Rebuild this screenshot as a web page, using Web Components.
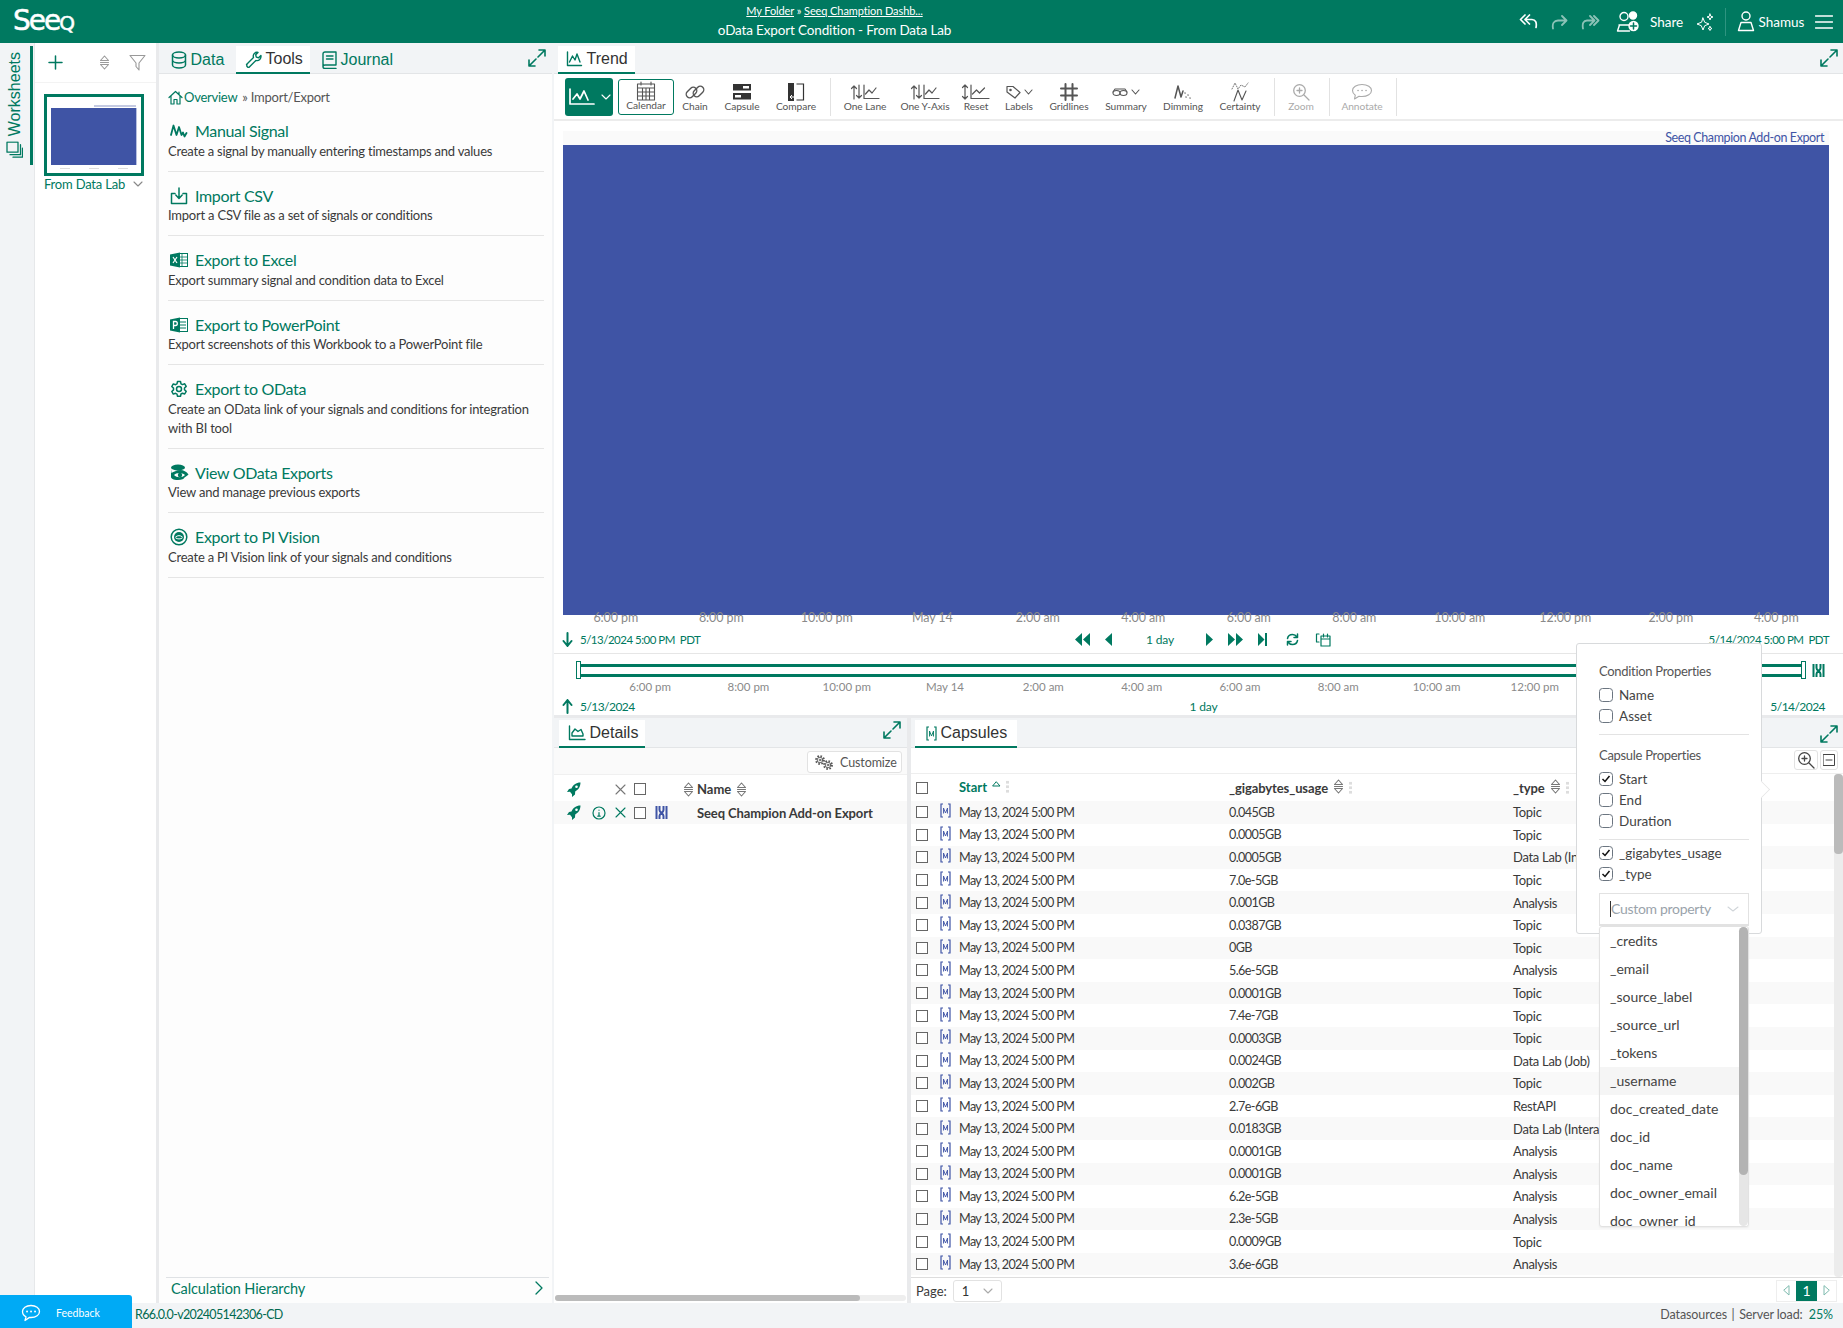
<!DOCTYPE html>
<html lang="en"><head><meta charset="utf-8"><title>oData Export Condition - From Data Lab</title>
<style>
html,body{margin:0;padding:0;background:#f2f4f6}
body{font-family:"Lato","Noto Sans",sans-serif;font-size:14px;color:#3a3a3a;width:1843px;height:1328px;overflow:hidden}
</style></head><body>
<sq-app></sq-app>
<script>
const svg=(w,h,body,sw=1.3,extra='')=>`<svg width="${w}" height="${h}" viewBox="0 0 ${w} ${h}" fill="none" stroke="currentColor" stroke-width="${sw}" stroke-linecap="round" stroke-linejoin="round" ${extra} style="display:block;flex:none">${body}</svg>`;
const I={
 expand:()=>svg(18,18,'<path d="M10 8l7-7M11 1h6v6M8 10l-7 7M1 11v6h6"/>',1.6),
 db:(s='')=>svg(16,18,'<ellipse cx="8" cy="4" rx="6.5" ry="3"/><path d="M1.5 4v10c0 1.7 3 3 6.5 3s6.5-1.300 6.500-3V4M1.500 9c0 1.700 3 3 6.500 3s6.500-1.300 6.500-3"/>',1.5,s),
 wrench:()=>svg(17,17,'<path d="M1.500 13.500l7-7c-.8-2.500.5-5 3.500-5.200l1 .2-2.300 2.300.6 2.300 2.300.6 2.300-2.300c.6 3-2 6-5 5l-6.800 6.800c-1 .8-3-1-2.100-2.700z"/>',1.4),
 book:()=>svg(15,18,'<path d="M3 1h11v13H3c-1.200 0-2 .8-2 2s.8 1.500 2 1.500h11M1 16V3c0-1.200.8-2 2-2M4.500 5h6.500M4.500 8h6.500"/>',1.4),
 sort:(c='#9a9a9a')=>svg(11,15,`<path d="M5.500 1L9.500 5.500h-8zM5.500 14L1.500 9.500h8zM1.500 7.500h8" stroke="${c}"/>`,1.1),
 filter:()=>svg(17,17,'<path d="M1 1.500h15L10 9v7L7 12.500V9z"/>',1.1),
 pages:()=>svg(17,17,'<path d="M6 1h10v11H6zM3.500 4v10.500h10M1 7v9.500h9" />',1.3),
 home:()=>svg(15,15,'<path d="M1 7.500L7.500 1.500 14 7.500M3 6v8h3v-4.500h3V14h3V6M11 2v2.500"/>',1.2),
 signal:()=>svg(18,16,'<path d="M1 12L3.500 2.500l3 9.500L9 4l2.500 8 1.500-2.500 1.500 4 2-3.500" />',1.8),
 csv:()=>svg(18,18,'<path d="M5 6.500H1.500v10h15v-10H13M9 1v10M5.800 8L9 11.500 12.200 8"/>',1.5),
 excel:()=>`<svg width="18" height="16" viewBox="0 0 18 16" style="display:block"><rect x="8" y="1.500" width="9.500" height="13" fill="#fff" stroke="#007960"/><path d="M8 5h9.500M8 8h9.500M8 11h9.500M12 1.500v13" stroke="#007960" stroke-width=".8"/><path d="M0 2.500L10 .5v15L0 13.500z" fill="#007960"/><path d="M3 5l4 6M7 5l-4 6" stroke="#fff" stroke-width="1.200"/></svg>`,
 ppt:()=>`<svg width="18" height="16" viewBox="0 0 18 16" style="display:block"><rect x="8" y="1.500" width="9.500" height="13" fill="#fff" stroke="#007960"/><path d="M10 5h6M10 8h6M10 11h6" stroke="#007960"/><path d="M0 2.500L10 .5v15L0 13.500z" fill="#007960"/><path d="M3.500 12V4.500h2c2.400 0 2.400 4 0 4h-2" stroke="#fff" fill="none" stroke-width="1.300"/></svg>`,
 gear:()=>svg(18,18,'<path d="M7.500 1.500h3l.5 2.300 1.500.8 2.200-.8 1.500 2.600-1.700 1.600v1.800l1.700 1.600-1.500 2.600-2.200-.8-1.500.8-.5 2.300h-3L7 14.100l-1.500-.8-2.200.8-1.500-2.600 1.700-1.600V8.100L1.800 6.500l1.500-2.600 2.200.8L7 3.900z"/><circle cx="9" cy="9" r="2.500"/>',1.5),
 dbeye:()=>`<svg width="19" height="18" viewBox="0 0 19 18" style="display:block"><ellipse cx="8" cy="3.500" rx="7" ry="3" fill="#007960"/><path d="M1 5v8c0 1.500 2 3 7 3 4 0 6-1 6.500-2.500 1.500-.8 3-2 4-3-2-3-5-4.500-8-4.500-4 0-7 2-9 3z" fill="#007960"/><path d="M4 11c2-2 7-3 11 0-3 3-8 3-11 0z" fill="#fff"/><circle cx="10" cy="11" r="2.200" fill="#007960"/></svg>`,
 pi:()=>`<svg width="18" height="18" viewBox="0 0 18 18" fill="none" stroke="#007960" style="display:block"><circle cx="9" cy="9" r="7.800" stroke-width="1.500"/><circle cx="9" cy="9" r="5" fill="#007960" stroke="none"/><path d="M5.500 9c2-1.800 5-1.800 7 0M5.500 9.800c2 1.500 5 1.500 7 0" stroke="#fff" stroke-width="1"/></svg>`,
 trend:(c='currentColor')=>svg(17,16,`<path d="M1.500 1v13.500h14M3.500 11l3-6 2.500 4 2-6 3 8" stroke="${c}"/>`,1.4),
 area:()=>svg(18,16,'<path d="M1.500 1v13.500h15.500M4 11V8l3-4 3 2.500 3-2 2 4.500v2z"/>',1.4),
 cap:(c='#3f54a5')=>`<svg width="11" height="15" viewBox="0 0 11 15" fill="none" stroke="${c}" style="display:block;flex:none"><path d="M3 1H1v13h2M8 1h2v13H8" stroke-width="1.200"/><path d="M3.500 10.500V5l2 5 2-5v5.500" stroke-width=".9"/></svg>`,
 capBold:(c='#3f54a5')=>`<svg width="13" height="15" viewBox="0 0 13 15" fill="none" style="display:block;flex:none"><path d="M1.500 1v13M4.500 1v4c0 3 4 3 4 6v3M8.500 1v4c0 3-4 3-4 6v3M11.500 1v13" stroke="${c}" stroke-width="2"/></svg>`,
 rocket:()=>`<svg width="14" height="15" viewBox="0 0 14 15" style="display:block"><path d="M13.500.5c-4.500 0-7.500 2.500-9 6L2 7 0 10l3-.2 2 2.500L5 15l3-2.500.2-3C11 8 13.500 5 13.500.5z" fill="#007960"/><circle cx="9.500" cy="4.800" r="1.300" fill="#fff"/></svg>`,
 info:()=>svg(14,14,'<circle cx="7" cy="7" r="6"/><path d="M7 6.500V10M5.800 10.200h2.400M7 4v.2"/>',1.2),
 x:(c)=>svg(11,11,`<path d="M1 1l9 9M10 1l-9 9" stroke="${c}"/>`,1.1),
 gears:()=>svg(20,17,'<circle cx="6" cy="6" r="4" stroke-width="1.800" stroke-dasharray="1.600 1.540" stroke-linecap="butt"/><circle cx="6" cy="6" r="2.800"/><circle cx="6" cy="6" r=".9"/><circle cx="14" cy="11" r="4" stroke-width="1.800" stroke-dasharray="1.600 1.540" stroke-linecap="butt"/><circle cx="14" cy="11" r="2.800"/><circle cx="14" cy="11" r=".9"/>',.9),
 zoom:()=>svg(18,18,'<circle cx="7.500" cy="7.500" r="5.800"/><path d="M12 12l5 5M7.500 5v5M5 7.500h5"/>',1.3),
 chev:(w=10,c='currentColor')=>svg(w,6,`<path d="M1 1l${(w-2)/2} 4 ${(w-2)/2}-4" stroke="${c}"/>`,1.1),
};
const T={
 line:()=>svg(28,20,'<path d="M2 2v15h24M5 12l4-5 3 5 4-8 4 9" stroke-width="1.700"/>',1.7),
 calendar:()=>svg(20,20,'<path d="M5 1v3M15 1v3M1.500 3h17v16h-17zM1.500 7h17M1.500 11h17M1.500 15h17M6.500 7v12M10 7v12M13.500 7v12"/>',1.1),
 chain:()=>svg(22,20,'<rect x="1.500" y="7" width="12" height="7" rx="3.500" transform="rotate(-45 7.500 10.500)"/><rect x="8.500" y="6" width="12" height="7" rx="3.500" transform="rotate(-45 14.500 9.500)"/>',1.4),
 capsule:()=>`<svg width="20" height="18" viewBox="0 0 20 18" style="display:block"><rect x="1" y="1" width="18" height="6.500" fill="#333"/><rect x="1" y="10" width="18" height="6.500" fill="#333"/><rect x="11" y="3" width="6" height="2.500" fill="#fff"/><rect x="3" y="12" width="6" height="2.500" fill="#fff"/></svg>`,
 compare:()=>`<svg width="18" height="20" viewBox="0 0 18 20" style="display:block"><path d="M1 1h6v18H1z" fill="#333"/><path d="M9.500 2h7v16h-7" fill="none" stroke="#333" stroke-width="1.200"/><path d="M5 13l-2 2 2 2M3 15h6M13 4l2 2-2 2M15 6H9" stroke="#fff" fill="none" stroke-width="1"/></svg>`,
 oneLane:()=>svg(30,18,'<path d="M4 16V3M1.500 5.500L4 3l2.500 2.500M9 2v13M6.500 12.500L9 15l2.500-2.500M14 2v13.500h15M15.500 11l3.500-4 3 3 4-5"/>',1.2),
 reset:()=>svg(30,18,'<path d="M4 16V2M1.500 4.500L4 2l2.500 2.500M1.500 13.500L4 16l2.500-2.500M10 2v13.500h18M11.500 11l4-4 3 3 5-5"/>',1.2),
 tag:()=>svg(15,14,'<path d="M1 1.500h6l7 6-5 5.500-8-6z"/><circle cx="4.500" cy="5" r=".7"/>',1.2),
 grid:()=>svg(18,18,'<path d="M5.500 1v16M12.500 1v16M1 5.500h16M1 12.500h16"/>',2),
 glasses:()=>svg(16,10,'<ellipse cx="4.500" cy="6" rx="3.500" ry="2.500"/><ellipse cx="11.500" cy="6" rx="3.500" ry="2.500"/><path d="M1 5l2-3h10l2 3" />',1.1),
 dimming:()=>svg(20,20,'<path d="M2 16L5 4l3 11 2-6" stroke-width="1.500"/><path d="M12 11l.1.1M15 13l.1.1M13 15l.1.1M17 16l.1.1" stroke-width="1.300"/>',1.5),
 certainty:()=>svg(20,22,'<path d="M2 8L5 2l3 6 3-4 4 2 3-4" stroke-dasharray="1 1.500" stroke-width=".8"/><path d="M4 20L8 9l4 10 4-9" stroke-width="1.100"/>',1),
 annotate:()=>svg(22,18,'<path d="M11 1.500c5.500 0 9.500 2.700 9.500 6s-4 6-9.500 6c-1 0-2-.1-3-.3L3.500 16l.8-3.800C2.500 11 1.500 9.400 1.500 7.500c0-3.300 4-6 9.500-6z"/><path d="M7 7.500h.1M11 7.500h.1M15 7.500h.1" stroke-width="1.600"/>',1.1),
};
function def(name,css,fn){
 customElements.define(name,class extends HTMLElement{
  connectedCallback(){
   if(this.shadowRoot)return;
   this.attachShadow({mode:'open'}).innerHTML=`<style>${css}</style>${fn(this)}`;
  }
 });
}
const TABCSS=`:host{display:inline-flex;align-items:center;box-sizing:border-box;height:28px;gap:3.500px;padding:0 9px;font:16px "Liberation Sans",Arial,sans-serif;color:#007960;flex:none}
:host([active]){background:#fff;color:#333;border-bottom:2.500px solid #007960;height:28px}
::slotted([slot=icon]){color:#007960;display:flex}`;
def('sq-tab',TABCSS,()=>`<slot name="icon"></slot><slot></slot>`);

def('sq-cb',`:host{display:inline-block;flex:none;box-sizing:border-box;width:12px;height:12px;border:1.500px solid #666;background:#fff}
:host([round]){width:14px;height:14px;border-radius:3.500px;border:1.200px solid #6b7580}
svg{display:block;margin:1px}`,e=>e.hasAttribute('checked')?`<svg width="10" height="10" viewBox="0 0 10 10" fill="none" stroke="#111" stroke-width="1.500"><path d="M1.500 5l2.500 2.500L8.500 2"/></svg>`:'');

def('sq-header',`:host{display:flex;align-items:center;height:43px;background:#007960;color:#fff;flex:none;font-size:13.500px}
.logo{width:156px;flex:none;padding-left:13px;box-sizing:border-box;font:400 28px/1 "DejaVu Sans",sans-serif;letter-spacing:-2px;-webkit-text-stroke:.5px #fff;margin-top:-2px}
.logo span{font-variant:small-caps}
.mid{flex:1;text-align:center}
.crumbs{font-size:11px;line-height:15px;margin-top:-1px;letter-spacing:-.1px}.crumbs u{text-decoration:underline}
.title{font-size:13.500px;line-height:20px;margin-top:2px;letter-spacing:-.15px}
.right{display:flex;align-items:center;width:330px;flex:none}
.c{display:flex;justify-content:center;align-items:center;flex:none}
.dim{opacity:.55}.sep{width:1px;height:28px;background:#2e9480;flex:none}`,()=>`
<div class="logo">See<span>q</span></div>
<div class="mid"><div class="crumbs"><u>My Folder</u> » <u>Seeq Chamption Dashb...</u></div><div class="title">oData Export Condition - From Data Lab</div></div>
<div class="right">
<span class="c" style="width:31px">${svg(20,17,'<path d="M6 2L1.500 6.500 6 11M10.500 2L6 6.500l4.500 4.500M6 6.500h7c3.500 0 5 3 4 8"/>',1.700)}</span>
<span class="c dim" style="width:30px">${svg(18,16,'<path d="M12 2l4.500 4.500L12 11M16 6.500H8C4 6.500 2 9.500 3 14.500"/>',1.800)}</span>
<span class="c dim" style="width:34px">${svg(22,16,'<path d="M10 2l4.500 4.500L10 11M14 2l4.500 4.500L14 11M13 6.500H7C3.500 6.500 2 9.500 3 14.500"/>',1.800)}</span>
<span class="c" style="width:40px">${svg(24,22,'<circle cx="8" cy="5.500" r="4"/><path d="M3 14h10M1.500 20l2-6M1.500 20h12"/><circle cx="17" cy="4.500" r="3.500" fill="#fff"/><circle cx="17.500" cy="15" r="5.200" fill="#fff" stroke="none"/><path d="M17.500 12v6M14.500 15h6" stroke="#007960" stroke-width="1.500"/>',1.400)}</span>
<span style="margin-left:2px;width:44.500px;flex:none">Share</span>
<span class="c" style="width:20px">${svg(18,18,'<path d="M7 5l1.700 4.300L13 11l-4.300 1.700L7 17l-1.700-4.300L1 11l4.300-1.700zM14 1l.8 2.200L17 4l-2.200.8L14 7l-.8-2.200L11 4l2.200-.8zM14 13.500l.6 1.400 1.400.6-1.400.6-.6 1.400-.6-1.400-1.400-.6 1.400-.6z"/>',1)}</span>
<span style="width:10px;flex:none"></span><span class="sep"></span><span style="width:11px;flex:none"></span>
<span class="c" style="width:18px">${svg(18,22,'<circle cx="9" cy="5" r="4"/><path d="M4 11.500h10l2.500 8h-15z"/>',1.400)}</span>
<span style="margin-left:4px;width:56px;flex:none">Shamus</span>
<span class="c" style="width:18px">${svg(18,16,'<path d="M.5 2h17M.5 8h17M.5 14h17"/>',1.400)}</span>
</div>`);

def('sq-rail',`:host{display:block;width:33px;flex:none;background:#f2f4f6;padding-top:3px;box-sizing:border-box}
.tab{box-sizing:border-box;width:33px;height:119px;border-right:3px solid #007960;display:flex;flex-direction:column;align-items:center;justify-content:center;color:#007960;padding-right:4px}
.t{writing-mode:vertical-rl;transform:rotate(180deg);font:16px "Liberation Sans",Arial,sans-serif;display:flex;align-items:center;gap:5px;padding-right:4px}
.t svg{transform:rotate(90deg)}`,()=>`<div class="tab"><div class="t">${I.pages()}Worksheets</div></div>`);

def('sq-worksheets',`:host{display:block;width:121px;flex:none;background:#fff;margin-left:1px;border-left:1px solid #e6e8ea}
.top{height:40px;box-sizing:border-box;border-bottom:1px solid #f3f3f3;display:flex;align-items:center;color:#999}
.plus{margin-left:13px;color:#007960;width:50px;display:flex}
.s{width:30px;display:flex;padding-left:2px;box-sizing:border-box}
.sheet{margin:11px 0 0 9px}
.th{box-sizing:border-box;width:100px;height:82px;border:3px solid #007960;background:#fff;padding:8px 4px 0 4px;display:flex;flex-direction:column}
.tt{align-self:flex-end;width:42px;height:2px;background:#c4cae2;margin-right:1px;margin-bottom:1px}
.blue{width:85px;height:57px;background:#3f54a5;border-right:1px solid #b7c0e0}
.ax{display:flex;justify-content:space-around;margin-top:3px}.ax i{width:10px;height:1px;background:#ddd}
.cap{display:flex;align-items:center;margin-top:0;color:#007960;font-size:13px;line-height:16px;width:100px;justify-content:space-between;letter-spacing:-.2px}
.cap span{color:#888;margin-right:1px}`,()=>`
<div class="top"><span class="plus">${svg(15,15,'<path d="M7.500 1v13M1 7.500h13"/>',1.500)}</span><span class="s">${I.sort()}</span><span class="s">${I.filter()}</span></div>
<div class="sheet"><div class="th"><div class="tt"></div><div class="blue"></div><div class="ax"><i></i><i></i><i></i></div></div>
<div class="cap">From Data Lab<span>${I.chev(10)}</span></div></div>`);

def('sq-tool-item',`:host{display:block;border-bottom:1px solid #e5e5e5;padding:14.500px 0 10px}
.h{display:flex;align-items:center;color:#007960;font-size:16px;line-height:20px;height:19px;letter-spacing:-.33px}
.i{width:27px;flex:none;display:flex;padding-left:2px;box-sizing:border-box}
.d{font-size:13px;line-height:19px;color:#3a3a3a;margin-top:1px;letter-spacing:-.22px}`,e=>`<div class="h"><span class="i"><slot name="icon"></slot></span>${e.getAttribute('heading')}</div><div class="d"><slot></slot></div>`);

def('sq-tools',`:host{display:flex;flex-direction:column;width:393px;flex:none;background:#fdfdfd;color:#007960}
.bar{height:31px;box-sizing:border-box;padding:3px 0 0 3px;background:#f2f4f6;border-bottom:1px solid #e3e5e7;display:flex;flex:none}
.bar sq-tab:nth-child(3){margin-left:3px}
.ex{margin-left:auto;padding:3px 6px 0 0}
.bc{padding:15px 0 0 9px;font-size:13px;line-height:16px;display:flex;align-items:center;gap:1px;color:#007960;letter-spacing:-.25px}
.bc b{font-weight:400;color:#555;margin-left:4px}
.list{padding:0 8px 0 9px;flex:1;margin-top:2px}
.list sq-tool-item svg{color:#007960}
.calc{margin-left:7px;margin-right:3px;border-top:1px solid #dfe2e5;height:26px;display:flex;align-items:center;justify-content:space-between;padding:0 6px 5px 5px;font-size:14.500px;color:#007960;flex:none;box-sizing:border-box;letter-spacing:-.1px}`,()=>`
<div class="bar"><sq-tab style="width:74px"><span slot="icon">${I.db()}</span>Data</sq-tab><sq-tab active style="width:74px"><span slot="icon">${I.wrench()}</span>Tools</sq-tab><sq-tab style="width:90px"><span slot="icon">${I.book()}</span>Journal</sq-tab><span class="ex">${I.expand()}</span></div>
<div class="bc">${I.home()}Overview <b>» Import/Export</b></div>
<div class="list">
<sq-tool-item heading="Manual Signal"><span slot="icon">${I.signal()}</span>Create a signal by manually entering timestamps and values</sq-tool-item>
<sq-tool-item heading="Import CSV"><span slot="icon">${I.csv()}</span>Import a CSV file as a set of signals or conditions</sq-tool-item>
<sq-tool-item heading="Export to Excel"><span slot="icon">${I.excel()}</span>Export summary signal and condition data to Excel</sq-tool-item>
<sq-tool-item heading="Export to PowerPoint"><span slot="icon">${I.ppt()}</span>Export screenshots of this Workbook to a PowerPoint file</sq-tool-item>
<sq-tool-item heading="Export to OData"><span slot="icon">${I.gear()}</span>Create an OData link of your signals and conditions for integration with BI tool</sq-tool-item>
<sq-tool-item heading="View OData Exports"><span slot="icon">${I.dbeye()}</span>View and manage previous exports</sq-tool-item>
<sq-tool-item heading="Export to PI Vision"><span slot="icon">${I.pi()}</span>Create a PI Vision link of your signals and conditions</sq-tool-item>
</div>
<div class="calc">Calculation Hierarchy ${svg(8,14,'<path d="M1 1l6 6-6 6"/>',1.300)}</div>`);

def('sq-tool-btn',`:host{display:flex;flex-direction:column;align-items:center;justify-content:flex-end;box-sizing:border-box;height:36px;margin-top:1px;flex:none;font-size:10.200px;color:#555;line-height:13px;gap:0;padding-bottom:2px;letter-spacing:-.05px}
:host([disabled]){color:#aaa}
:host([outlined]){border:1px solid #007960;border-radius:3px}
.ic{display:flex;align-items:center;gap:3px;height:21px;margin-bottom:-2px}`,e=>`<div class="ic"><slot></slot></div>${e.getAttribute('label')}`);

def('sq-toolbar',`:host{display:flex;height:47px;box-sizing:border-box;padding:4px 0 0 11px;background:#fff;border-bottom:2px solid #ececec;flex:none;color:#333}
.go{width:48px;height:38px;background:#007960;border-radius:3px;color:#fff;display:flex;align-items:center;justify-content:center;gap:5px;margin-right:5px;flex:none}
.sep{width:1px;height:38px;background:#e2e2e2;flex:none}
.dis{color:#aaa}`,()=>{
 const b=(l,w,ic,x='')=>`<sq-tool-btn label="${l}" style="width:${w}px" ${x}>${ic}</sq-tool-btn>`;
 return `<div class="go">${T.line()}${I.chev(10)}</div>`+
 b('Calendar',56,T.calendar(),'outlined')+b('Chain',42,T.chain())+b('Capsule',52,T.capsule())+b('Compare',56,T.compare())+
 `<span style="width:6px"></span><span class="sep"></span>`+
 b('One Lane',68,T.oneLane())+b('One Y-Axis',52,T.oneLane())+b('Reset',50,T.reset())+b('Labels',36,T.tag()+I.chev(9))+b('Gridlines',64,T.grid())+b('Summary',50,T.glasses()+I.chev(9))+b('Dimming',64,T.dimming())+b('Certainty',50,T.certainty())+
 `<span style="width:9px"></span><span class="sep"></span>`+
 b('Zoom',52,`<span class="dis">${I.zoom()}</span>`,'disabled')+`<span style="width:2px"></span><span class="sep"></span>`+
 b('Annotate',64,`<span class="dis">${T.annotate()}</span>`,'disabled')+`<span style="width:2px"></span><span class="sep"></span>`;
});

def('sq-chart',`:host{display:block;flex:none;height:532px;padding:10px 14px 0 9px;box-sizing:border-box;background:#fff}
.head{height:14px;background:#fafafa;text-align:right;font-size:12.500px;line-height:14px;color:#3f54a5;padding-right:5px;letter-spacing:-.4px}
.plot{height:470px;background:#3f54a5}
.axis{display:grid;grid-template-columns:repeat(12,105.500px);height:14px;margin-top:-4px;position:relative;font-size:12.500px;line-height:14px;color:#8a8a8a;text-align:center;letter-spacing:-.1px}
.nav{display:flex;align-items:center;height:18px;margin-top:5px;color:#007960;font-size:11.500px;margin-left:-1px}
.left{display:flex;align-items:center;gap:7px;width:507px;flex:none;letter-spacing:-.5px}
.c{display:flex;justify-content:center;flex:none;font-size:12px;letter-spacing:-.2px}
.r{flex:1;text-align:right;letter-spacing:-.5px}`,()=>{
 const L=['6:00 pm','8:00 pm','10:00 pm','May 14','2:00 am','4:00 am','6:00 am','8:00 am','10:00 am','12:00 pm','2:00 pm','4:00 pm'];
 const tri=(d)=>`<path d="${d}" fill="#007960" stroke="none"/>`;
 return `<div class="head">Seeq Champion Add-on Export</div><div class="plot"></div>
 <div class="axis">${L.map(t=>`<span>${t}</span>`).join('')}</div>
 <div class="nav"><span class="left">${svg(11,15,'<path d="M5.500 1v12M1.500 9l4 5 4-5"/>',2)}<span>5/13/2024 5:00 PM &nbsp;PDT</span></span>
 <span class="c" style="width:26px">${svg(15,13,tri('M7 0v13L0 6.500zM15 0v13L8 6.500z'))}</span>
 <span class="c" style="width:26px">${svg(7,13,tri('M7 0v13L0 6.500z'))}</span>
 <span class="c" style="width:78px">1 day</span>
 <span class="c" style="width:20px">${svg(7,13,tri('M0 0v13l7-6.500z'))}</span>
 <span class="c" style="width:32px">${svg(15,13,tri('M0 0v13l7-6.500zM8 0v13l7-6.500z'))}</span>
 <span class="c" style="width:22px">${svg(9,13,tri('M0 0v13l6.500-6.500zM7 0h2v13H7z'))}</span>
 <span class="c" style="width:38px">${svg(13,13,'<path d="M1.500 5.500C2 3 4 1.500 6.500 1.500c2 0 3.500 1 4.500 2.500M11.500 7.500c-.5 2.500-2.500 4-5 4-2 0-3.500-1-4.500-2.500M11.500 1v3.500H8M1.500 12V8.500H5"/>',1.500)}</span>
 <span class="c" style="width:24px">${svg(16,15,'<path d="M6 4h9v10H6zM6 7h9M8.500 2v3M12.500 2v3M4 2H1.500v8H4"/>',1.200)}</span>
 <span class="r">5/14/2024 5:00 PM &nbsp;PDT</span></div>`;
});

def('sq-range',`:host{display:block;flex:none;height:62px;background:#fff;border-top:1px solid #e6e6e6;box-sizing:border-box;color:#007960}
.bar{display:flex;align-items:center;margin:7px 0 0 22px;height:18px;width:1249px}
.h{box-sizing:border-box;width:5px;height:18px;border:1.500px solid #007960;flex:none}
.b{flex:1;height:13px;border-top:3px solid #007960;border-bottom:3px solid #007960;box-sizing:border-box}
.ti{margin-left:6px}
.ticks{display:grid;grid-template-columns:repeat(12,98.300px);margin:1px 0 0 47px;font-size:11.500px;line-height:14px;color:#8a8a8a;text-align:center}
.d{display:flex;align-items:center;justify-content:space-between;margin:4px 18px 0 8px;font-size:12px;height:16px}
.d span{display:flex;align-items:center;gap:7px;letter-spacing:-.55px}`,()=>{
 const L=['6:00 pm','8:00 pm','10:00 pm','May 14','2:00 am','4:00 am','6:00 am','8:00 am','10:00 am','12:00 pm','2:00 pm','4:00 pm'];
 return `<div class="bar"><i class="h"></i><i class="b"></i><i class="h"></i><span class="ti">${I.capBold('#007960')}</span></div>
 <div class="ticks">${L.map(t=>`<span>${t}</span>`).join('')}</div>
 <div class="d"><span style="width:30%">${svg(11,15,'<path d="M5.500 14V2M1.500 6l4-5 4 5"/>',2)}5/13/2024</span><span style="padding-left:20px;letter-spacing:-.2px">1 day</span><span style="width:30%;justify-content:flex-end">5/14/2024</span></div>`;
});

def('sq-details',`:host{display:flex;flex-direction:column;width:353px;flex:none;background:#fff}
.bar{height:30px;box-sizing:border-box;padding:2px 6px 0 5px;background:#f2f4f6;border-bottom:1px solid #e3e5e7;display:flex;justify-content:space-between;flex:none;color:#007960}
.ex{padding-top:1px}
.cu{height:27px;box-sizing:border-box;background:#fafafa;border-bottom:1px solid #f0f0f0;display:flex;justify-content:flex-end;padding:3px 5px 0 0}
.btn{display:flex;align-items:center;gap:6px;box-sizing:border-box;width:95px;height:22px;padding-left:6px;background:#fff;border:1px solid #e2e2e2;border-radius:3px;font-size:12.500px;color:#555;letter-spacing:-.1px}
.row{display:grid;grid-template-columns:20px 27.500px 19.500px 21px 42px auto;align-items:center;padding-left:13px;box-sizing:border-box}
.hd{height:26px;font-weight:700;font-size:13px;padding-top:2px}
.rw{height:23px;background:#f9f9f9;font-weight:700;font-size:13px;letter-spacing:-.1px}
.g{color:#007960;display:flex}
.in{padding-left:5px}
.nm{display:flex;align-items:center;gap:5px}
.sp{flex:1}
.hs{height:6px;margin:0 1px 2px 1px;background:#eee;border-radius:3px}
.hs i{display:block;height:6px;width:305px;background:#bbb;border-radius:3px}`,()=>`
<div class="bar"><sq-tab active style="width:86px;height:28px"><span slot="icon">${I.area()}</span>Details</sq-tab><span class="ex">${I.expand()}</span></div>
<div class="cu"><div class="btn">${I.gears()}Customize</div></div>
<div class="row hd"><span class="g">${I.rocket()}</span><span></span><span>${I.x('#777')}</span><sq-cb></sq-cb><span style="justify-self:end;padding-right:3px">${I.sort('#777')}</span><span class="nm">Name ${I.sort('#777')}</span></div>
<div class="row rw"><span class="g">${I.rocket()}</span><span class="g in">${I.info()}</span><span>${I.x('#007960')}</span><sq-cb></sq-cb><span>${I.capBold()}</span><span>Seeq Champion Add-on Export</span></div>
<div class="sp"></div><div class="hs"><i></i></div>`);

def('sq-capsules',`:host{display:flex;flex-direction:column;flex:1;background:#fff;min-width:0}
.bar{height:30px;box-sizing:border-box;padding:2px 5px 0 4px;background:#f2f4f6;border-bottom:1px solid #e3e5e7;display:flex;justify-content:space-between;flex:none;color:#007960}
.ex{padding-top:5px}
.tools{height:26px;box-sizing:border-box;display:flex;justify-content:flex-end;gap:2px;padding:2px 5px 0 0;border-bottom:1px solid #eee;flex:none}
.sb{box-sizing:border-box;height:20px;width:24px;border:1px solid #e2e2e2;border-radius:3px;display:flex;align-items:center;justify-content:center;color:#444}
.body{flex:1;display:flex;min-height:0;height:503px;overflow:hidden;border-bottom:1px solid #ddd}
.tb{flex:1;min-width:0}
.row{display:grid;grid-template-columns:5px 12px 12px 11px 8px 270px 284px 1fr;align-items:center;height:22.600px;font-size:13px;white-space:nowrap;overflow:hidden}
.row.head{height:27px;font-weight:700}
.row>*{min-width:0}
.row svg{margin-top:-3px}
.row:nth-child(even){background:#f9f9f9}
.head .st{color:#007960;display:flex;align-items:center;gap:5px;margin-top:-2px}
.th{display:flex;align-items:center;gap:5px;letter-spacing:-.1px}
.dots{width:3px;height:13px;background:radial-gradient(circle,#ddd 1.500px,transparent 1.600px) 0 0/3px 4.500px}
.dt{font-size:12.600px;letter-spacing:-.62px}.gb{font-size:12.600px;letter-spacing:-.6px}.ty{letter-spacing:-.3px}
.scroll{width:9px;background:#ececec;flex:none;border-radius:4px}
.scroll i{display:block;height:80px;margin-top:0;background:#bbb;border-radius:4px}
.foot{height:25px;display:flex;align-items:center;flex:none;padding:0 6px 0 5px;font-size:13px;box-sizing:border-box}
.sel{box-sizing:border-box;width:49px;height:22px;border:1px solid #e2e2e2;border-radius:3px;margin-left:6px;display:flex;align-items:center;justify-content:space-between;padding:0 8px 0 8px;color:#aaa}
.sel b{font-weight:400;color:#333}
.pg{margin-left:auto;display:flex;height:22px;border:1px solid #eee;box-sizing:border-box;align-items:stretch}
.pg span{width:19px;display:flex;align-items:center;justify-content:center;color:#007960}
.pg .on{width:21px;background:#007960;color:#fff;font-size:14px}`,()=>{
 const gb=["0.045GB","0.0005GB","0.0005GB","7.0e-5GB","0.001GB","0.0387GB","0GB","5.6e-5GB","0.0001GB","7.4e-7GB","0.0003GB","0.0024GB","0.002GB","2.7e-6GB","0.0183GB","0.0001GB","0.0001GB","6.2e-5GB","2.3e-5GB","0.0009GB","3.6e-6GB"];
 const ty=["Topic","Topic","Data Lab (Interactive)","Topic","Analysis","Topic","Topic","Analysis","Topic","Topic","Topic","Data Lab (Job)","Topic","RestAPI","Data Lab (Interactive)","Analysis","Analysis","Analysis","Analysis","Topic","Analysis"];
 const rows=gb.map((g,i)=>`<div class="row"><i></i><sq-cb></sq-cb><i></i>${I.cap()}<i></i><span class="dt">May 13, 2024 5:00 PM</span><span class="gb">${g}</span><span class="ty">${ty[i]}</span></div>`).join('');
 return `<div class="bar"><sq-tab active style="width:102px;height:28px;padding-left:11px"><span slot="icon">${I.cap('#007960')}</span>Capsules</sq-tab><span class="ex">${I.expand()}</span></div>
 <div class="tools"><span class="sb">${I.zoom()}</span><span class="sb" style="width:18px">${svg(12,12,'<path d="M.5.5h11v11H.5zM3 6h6"/>',1)}</span></div>
 <div class="body"><div class="tb"><div class="row head" style="background:#fff"><i></i><sq-cb></sq-cb><i></i><i></i><i></i>
 <span class="st">Start ${svg(9,6,'<path d="M4.500 1L8 5H1z"/>',1,'style="margin-top:-5px"')}<i class="dots"></i></span>
 <span class="th">_gigabytes_usage ${I.sort('#777')}<i class="dots"></i></span><span class="th">_type ${I.sort('#777')}<i class="dots"></i></span></div>${rows}</div>
 <div class="scroll"><i></i></div></div>
 <div class="foot">Page: <span class="sel"><b>1</b>${I.chev(10)}</span>
 <span class="pg"><span>${svg(7,11,'<path d="M6 1v9L1 5.500z"/>',1,'style="opacity:.5"')}</span><span class="on">1</span><span>${svg(7,11,'<path d="M1 1v9l5-4.500z"/>',1,'style="opacity:.5"')}</span></span></div>`;
});

def('sq-popover',`:host{position:absolute;left:1576px;top:643px;width:186px;height:291px;box-sizing:border-box;background:#fff;border:1px solid #d8dadc;border-radius:3px;padding:18.500px 12px 0 22px;font-size:13.500px;color:#444}
.h{font-size:13px;line-height:16px;color:#555;height:16px;letter-spacing:-.3px}
.c{display:flex;align-items:center;gap:6px;height:21px;line-height:21px}
.hr{border-top:1px solid #e3e3e3;margin:7px 0 0}
.arrow{position:absolute;right:-8px;top:138px;width:14px;height:14px;background:#fff;transform:rotate(45deg) scale(.8);border-top:1px solid #e5e5e5;border-right:1px solid #e5e5e5}
.in{box-sizing:border-box;height:33px;border:1px solid #e2e2e2;border-bottom-width:2px;display:flex;align-items:center;padding-left:10px;margin-top:8px;color:#9aa3ab;font-size:14px;letter-spacing:-.3px}
.in i{width:1px;height:16px;background:#333}
.in span{margin-left:auto;margin-right:9px;color:#d0d5d9}
.menu{position:absolute;left:22px;top:282px;width:150px;height:301px;background:#fff;border:1px solid #e2e2e2;border-radius:3px;box-sizing:border-box;display:flex;overflow:hidden;box-shadow:0 1px 2px rgba(0,0,0,.06)}
.ls{flex:1;min-width:0}
.ls div{height:28px;line-height:28px;padding-left:10px;font-size:14px;color:#444}
.ls .hv{background:#f5f5f5}
.sc{width:9px;background:#e6e6e6;border-radius:5px;flex:none}.sc i{display:block;height:248px;background:#b3b3b3;border-radius:5px}`,()=>{
 const c=(t,on)=>`<div class="c"><sq-cb round ${on?'checked':''}></sq-cb>${t}</div>`;
 const items=['_credits','_email','_source_label','_source_url','_tokens','_username','doc_created_date','doc_id','doc_name','doc_owner_email','doc_owner_id'];
 return `<div class="h" style="margin-bottom:6px">Condition Properties</div>${c('Name')}${c('Asset')}<div class="hr"></div>
 <div class="h" style="margin:12px 0 6px">Capsule Properties</div>${c('Start',1)}${c('End')}${c('Duration')}<div class="hr" style="margin-bottom:3px"></div>
 ${c('_gigabytes_usage',1)}${c('_type',1)}<div class="in"><i></i>Custom property<span>${I.chev(12)}</span></div>
 <div class="arrow"></div>
 <div class="menu"><div class="ls">${items.map(t=>`<div class="${t=='_username'?'hv':''}">${t}</div>`).join('')}</div><div class="sc"><i></i></div></div>`;
});

def('sq-status',`:host{display:flex;align-items:center;height:25px;flex:none;background:#f2f4f6;padding:0 10px 2px 135px;font-size:12.500px;box-sizing:border-box}
.v{color:#00694f;letter-spacing:-.65px}.r{margin-left:auto;color:#555;letter-spacing:-.1px}.r b{font-weight:400;color:#007960}`,()=>`<span class="v">R66.0.0-v202405142306-CD</span><span class="r">Datasources &thinsp;|&thinsp; Server load: &nbsp;<b>25%</b></span>`);

def('sq-feedback',`:host{position:absolute;left:0;bottom:0;width:132px;height:33px;background:#00aaf5;border-top-right-radius:3px;color:#fff;display:flex;align-items:center;font-size:10.500px;gap:15px;padding:2px 0 0 21px;box-sizing:border-box}`,()=>`${svg(20,18,'<path d="M10 1.500c5 0 8.500 2.700 8.500 6s-3.500 6-8.500 6l-1.500-.1L4 16.500l1-3.700C3 11.800 1.500 9.800 1.500 7.500c0-3.300 3.500-6 8.500-6z"/><path d="M6 7.500h.1M10 7.500h.1M14 7.500h.1" stroke-width="1.800"/>',1.300)}Feedback`);

def('sq-app',`:host{display:flex;flex-direction:column;width:1843px;height:1328px;position:relative;overflow:hidden}
.main{flex:1;display:flex;min-height:0}
.gut{width:3px;flex:none;background:#e9eaec}
.right{flex:1;display:flex;flex-direction:column;min-width:0;margin-left:2px}
.tbar{height:31px;box-sizing:border-box;padding:3px 5px 0 4px;background:#f2f4f6;border-bottom:1px solid #e3e5e7;display:flex;justify-content:space-between;color:#007960;flex:none}
.hgut{height:3px;background:#e9eaec;flex:none}
.lower{flex:1;display:flex;min-height:0}
.vg{width:4px;background:#e9eaec;flex:none}`,()=>`
<sq-header></sq-header>
<div class="main"><sq-rail></sq-rail><sq-worksheets></sq-worksheets><div class="gut"></div><sq-tools></sq-tools>
<div class="right">
<div class="tbar"><sq-tab active style="width:77px;padding-left:8px"><span slot="icon">${I.trend()}</span>Trend</sq-tab><span style="padding-top:3px">${I.expand()}</span></div>
<sq-toolbar></sq-toolbar><sq-chart></sq-chart><sq-range></sq-range><div class="hgut"></div>
<div class="lower"><sq-details></sq-details><div class="vg"></div><sq-capsules></sq-capsules></div>
</div></div>
<sq-status></sq-status><sq-popover></sq-popover><sq-feedback></sq-feedback>`);
</script>
</body></html>
